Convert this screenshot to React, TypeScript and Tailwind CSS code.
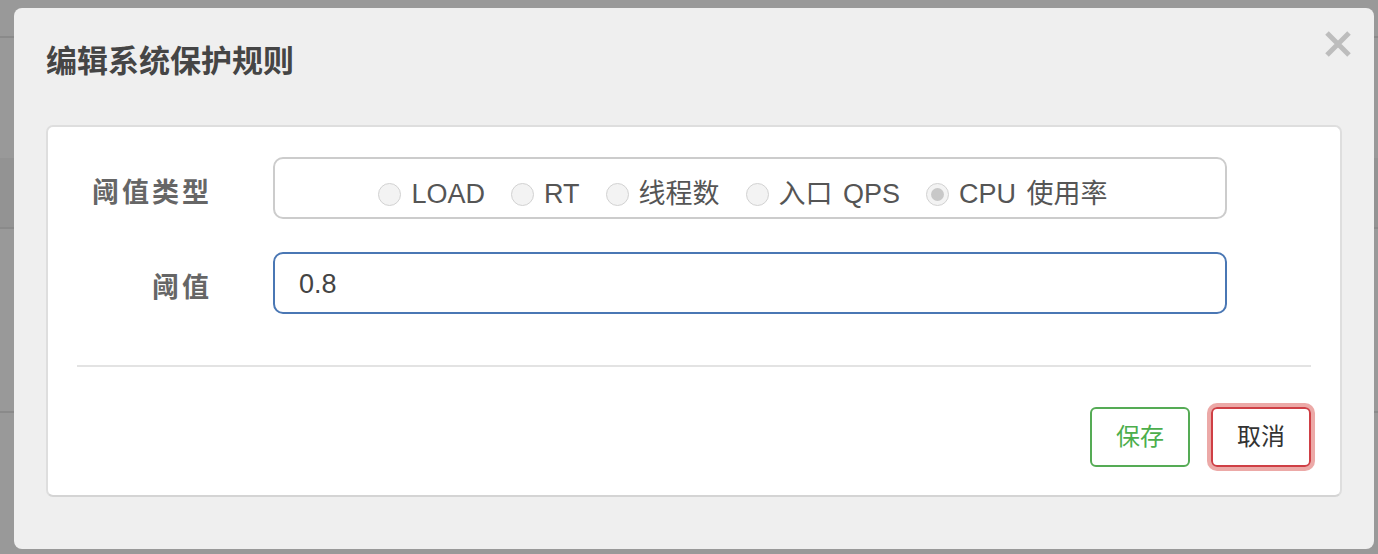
import React from "react";

const options = [
  { label: "LOAD", checked: false },
  { label: "RT", checked: false },
  { label: "线程数", checked: false },
  { label: "入口 QPS", checked: false },
  { label: "CPU 使用率", checked: true },
];

function Radio({ label, checked }: { label: string; checked: boolean }) {
  return (
    <label className="flex items-center gap-[10px]">
      <span className="flex h-[23px] w-[23px] items-center justify-center rounded-full border border-[#d2d2d2] bg-[#f3f3f3]">
        {checked && <span className="h-[13px] w-[13px] rounded-full bg-[#c8c8c8]" />}
      </span>
      <span>{label}</span>
    </label>
  );
}

export default function App() {
  return (
    <div className="relative h-[554px] w-[1378px] overflow-hidden bg-[#999999] font-['Liberation_Sans','Noto_Sans_CJK_SC',sans-serif]">
      {/* page behind the overlay */}
      <div className="h-[38px] border-b-2 border-[#8a8a8a]" />
      <div className="mt-[120px] h-[71px] border-b-2 border-[#8a8a8a] bg-[#939393]" />
      <div className="mt-[182px] h-[2px] bg-[#8a8a8a]" />

      {/* modal */}
      <div className="absolute left-[14px] top-[8px] h-[541px] w-[1360px] rounded-[8px] bg-[#efefef] px-[32px]">
        <button className="absolute right-[23px] top-[23px]">
          <svg width="26" height="26" viewBox="0 0 26 26">
            <path d="M2 2 L24 24 M24 2 L2 24" stroke="#bdbdbd" strokeWidth="5" />
          </svg>
        </button>

        <h2 className="mt-[34px] h-[40px] text-[31px] font-bold leading-[40px] text-[#454545]">
          编辑系统保护规则
        </h2>

        <div className="mt-[43px] h-[372px] rounded-[7px] border-2 border-[#dedede] border-b-[#d4d4d4] bg-white px-[29px] pt-[30px]">
          <div className="flex items-center gap-[61px]">
            <label className="w-[135px] pt-[10px] text-right text-[27px] font-bold tracking-[3px] text-[#666]">
              阈值类型
            </label>
            <div className="flex h-[62px] w-[954px] items-center justify-center gap-[26px] rounded-[10px] border-2 border-[#cccccc] pr-[14px] pt-[13px] text-[27px] text-[#555] [word-spacing:3px]">
              {options.map((o) => (
                <Radio key={o.label} label={o.label} checked={o.checked} />
              ))}
            </div>
          </div>

          <div className="mt-[33px] flex items-center gap-[61px]">
            <label className="w-[135px] pt-[10px] text-right text-[27px] font-bold tracking-[3px] text-[#666]">
              阈值
            </label>
            <input
              readOnly
              value="0.8"
              className="h-[62px] w-[954px] rounded-[10px] border-2 border-[#4a77b4] px-[24px] pt-[2px] text-[27px] text-[#444] outline-none"
            />
          </div>

          <div className="mt-[51px] h-[2px] bg-[#e3e3e3]" />

          <div className="mt-[40px] flex justify-end gap-[21px]">
            <button className="h-[60px] w-[100px] rounded-[6px] border-2 border-[#55ab55] text-[24px] text-[#4cae4c]">
              保存
            </button>
            <button className="h-[60px] w-[100px] rounded-[6px] border-2 border-[#cf3f45] text-[24px] text-[#333] shadow-[0_0_0_4px_rgba(217,83,79,0.5)]">
              取消
            </button>
          </div>
        </div>
      </div>
    </div>
  );
}
